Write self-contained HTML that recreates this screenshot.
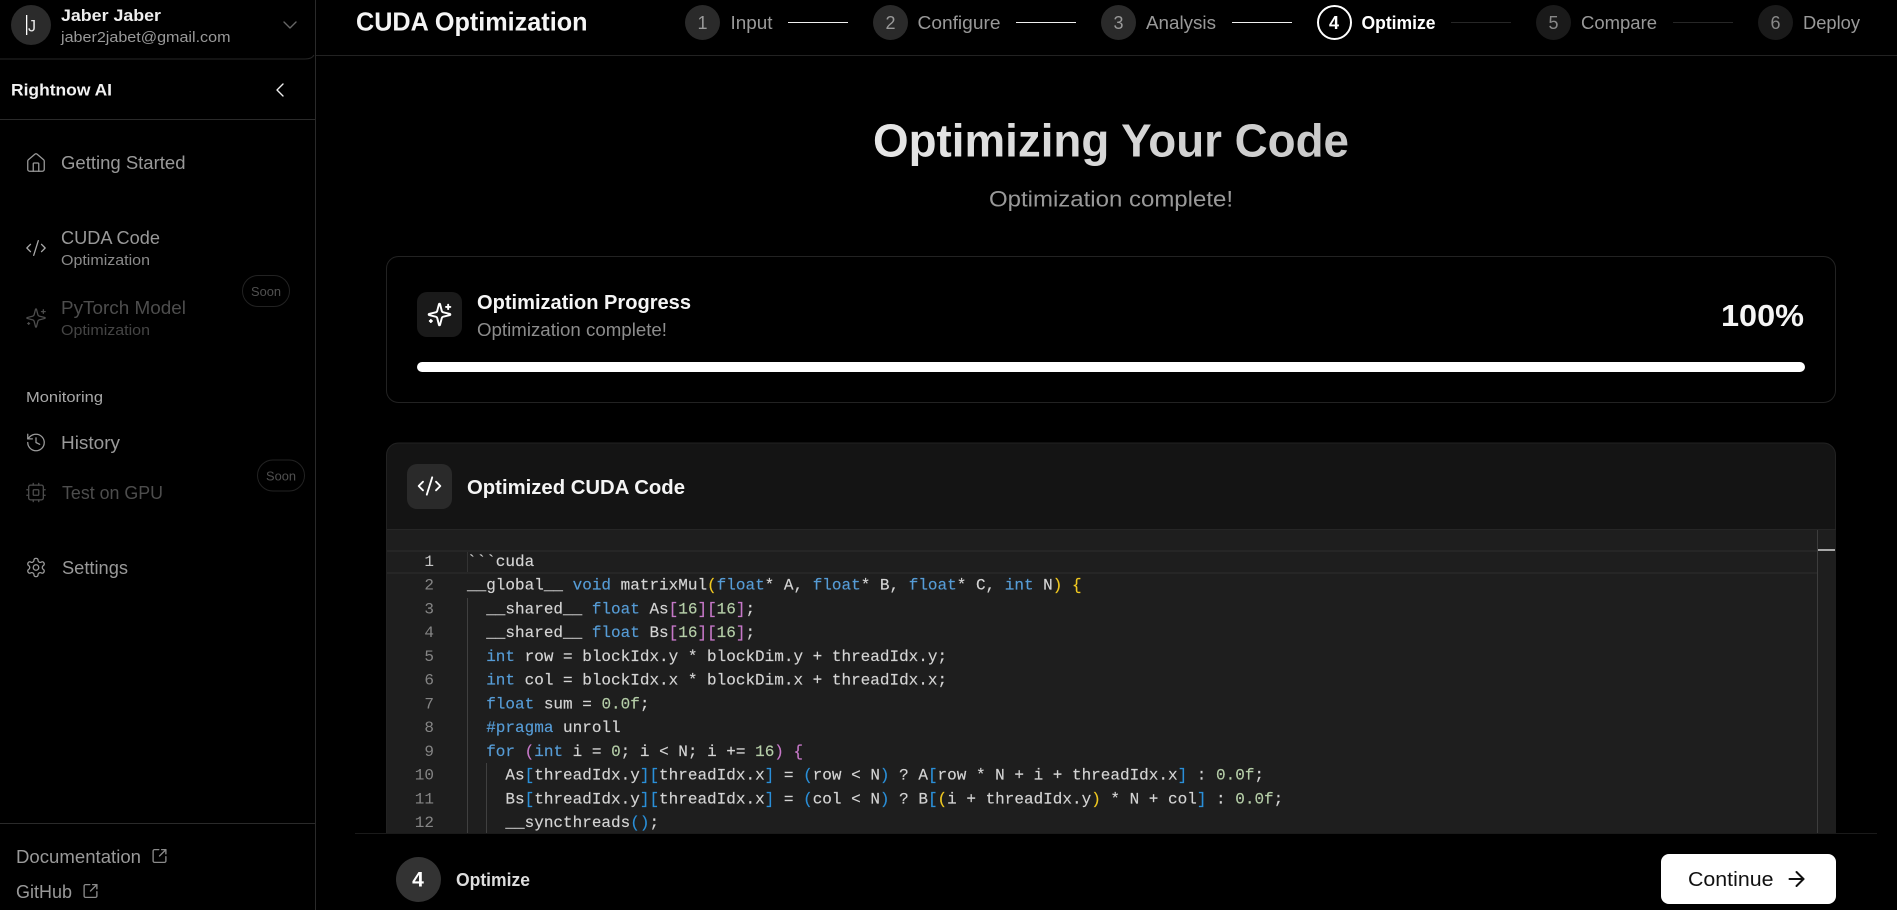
<!DOCTYPE html>
<html lang="en">
<head>
<meta charset="utf-8">
<title>CUDA Optimization</title>
<style>
html,body{margin:0;padding:0;background:#000;width:1897px;height:910px;overflow:hidden}
svg{display:block}
text{font-family:"Liberation Sans",Arial,sans-serif}
.b{font-weight:700}
.code text{font-family:"Liberation Mono",monospace;font-size:16px;fill:#d4d4d4;stroke:#d4d4d4;stroke-width:.15;white-space:pre}
.k{fill:#569cd6;stroke:#569cd6}.n{fill:#b5cea8;stroke:#b5cea8}.g{fill:#f0c820;stroke:#f0c820}.p{fill:#c678c8;stroke:#c678c8}.l{fill:#2a8fd8;stroke:#2a8fd8}
.ln text{font-family:"Liberation Mono",monospace;font-size:16px;fill:#858585;text-anchor:end}
.ic{fill:none;stroke-linecap:round;stroke-linejoin:round}
</style>
</head>
<body>
<svg xmlns="http://www.w3.org/2000/svg" width="1897" height="910" viewBox="0 0 1897 910">
<defs>
<linearGradient id="hg" x1="0" y1="0" x2="1" y2="0"><stop offset="0" stop-color="#e6e6e6"/><stop offset="1" stop-color="#c8c8c8"/></linearGradient>
<clipPath id="cc"><rect x="388" y="530" width="1448" height="303"/></clipPath>
</defs>
<rect width="1897" height="910" fill="#000"/>

<!-- Sidebar -->
<g>
<rect x="315" y="0" width="1" height="910" fill="#2a2a2a"/>
<circle cx="31" cy="25" r="20" fill="#2b2b2b"/>
<rect x="26" y="15" width="1.3" height="20" fill="#fff"/>
<text x="28" y="31.5" font-size="17" fill="#e8e8e8" textLength="8" lengthAdjust="spacingAndGlyphs">J</text>
<text class="b" x="61" y="21" font-size="16.5" fill="#eee" textLength="100" lengthAdjust="spacingAndGlyphs">Jaber Jaber</text>
<text x="61" y="42" font-size="14.5" fill="#999" textLength="169.5" lengthAdjust="spacingAndGlyphs">jaber2jabet@gmail.com</text>
<svg x="278" y="13" width="24" height="24" viewBox="0 0 24 24" class="ic" stroke="#666" stroke-width="1.4"><path d="m6 9 6 6 6-6"/></svg>
<path d="M0 59H305Q312 59 314 55" fill="none" stroke="#262626"/>
<text class="b" x="11" y="95.5" font-size="17" fill="#f2f2f2" textLength="101" lengthAdjust="spacingAndGlyphs">Rightnow AI</text>
<svg x="268" y="78" width="24" height="24" viewBox="0 0 24 24" class="ic" stroke="#eee" stroke-width="1.4"><path d="m15 18-6-6 6-6"/></svg>
<rect x="0" y="119" width="315" height="1" fill="#2a2a2a"/>

<svg x="25" y="152" width="22" height="22" viewBox="0 0 24 24" class="ic" stroke="#999" stroke-width="1.4"><path d="M15 21v-8a1 1 0 0 0-1-1h-4a1 1 0 0 0-1 1v8"/><path d="M3 10a2 2 0 0 1 .709-1.528l7-5.999a2 2 0 0 1 2.582 0l7 5.999A2 2 0 0 1 21 10v9a2 2 0 0 1-2 2H5a2 2 0 0 1-2-2z"/></svg>
<text x="61" y="169" font-size="18" fill="#999" textLength="124.5" lengthAdjust="spacingAndGlyphs">Getting Started</text>

<svg x="25" y="237" width="22" height="22" viewBox="0 0 24 24" class="ic" stroke="#aaa" stroke-width="1.4"><path d="m18 16 4-4-4-4"/><path d="m6 8-4 4 4 4"/><path d="m14.5 4-5 16"/></svg>
<text x="61" y="244" font-size="18" fill="#999" textLength="99" lengthAdjust="spacingAndGlyphs">CUDA Code</text>
<text x="61" y="265" font-size="15" fill="#8a8a8a" textLength="89" lengthAdjust="spacingAndGlyphs">Optimization</text>

<svg x="25" y="307" width="22" height="22" viewBox="0 0 24 24" class="ic" stroke="#4d4d4d" stroke-width="1.4"><path d="M9.937 15.5A2 2 0 0 0 8.5 14.063l-6.135-1.582a.5.5 0 0 1 0-.962L8.5 9.936A2 2 0 0 0 9.937 8.5l1.582-6.135a.5.5 0 0 1 .963 0L14.063 8.5A2 2 0 0 0 15.5 9.937l6.135 1.581a.5.5 0 0 1 0 .964L15.5 14.063a2 2 0 0 0-1.437 1.437l-1.582 6.135a.5.5 0 0 1-.963 0z"/><path d="M20 3v4"/><path d="M22 5h-4"/><path d="M4 17v2"/><path d="M5 18H3"/></svg>
<text x="61" y="314" font-size="18" fill="#4d4d4d" textLength="125" lengthAdjust="spacingAndGlyphs">PyTorch Model</text>
<text x="61" y="335" font-size="15" fill="#444" textLength="89" lengthAdjust="spacingAndGlyphs">Optimization</text>
<rect x="242.5" y="275.5" width="47" height="31" rx="15.5" fill="#000" stroke="#222"/>
<text x="251" y="296" font-size="13" fill="#505050" textLength="30" lengthAdjust="spacingAndGlyphs">Soon</text>

<text x="26" y="402" font-size="14.5" fill="#a8a8a8" textLength="77" lengthAdjust="spacingAndGlyphs">Monitoring</text>
<svg x="25" y="431.5" width="22" height="22" viewBox="0 0 24 24" class="ic" stroke="#999" stroke-width="1.4"><path d="M3 12a9 9 0 1 0 9-9 9.75 9.75 0 0 0-6.74 2.74L3 8"/><path d="M3 3v5h5"/><path d="M12 7v5l4 2"/></svg>
<text x="61" y="449" font-size="18" fill="#999" textLength="59" lengthAdjust="spacingAndGlyphs">History</text>
<svg x="25" y="481.5" width="22" height="22" viewBox="0 0 24 24" class="ic" stroke="#4d4d4d" stroke-width="1.4"><rect width="16" height="16" x="4" y="4" rx="2"/><rect width="6" height="6" x="9" y="9" rx="1"/><path d="M15 2v2M15 20v2M2 15h2M2 9h2M20 15h2M20 9h2M9 2v2M9 20v2"/></svg>
<text x="62" y="499" font-size="18" fill="#4d4d4d" textLength="101" lengthAdjust="spacingAndGlyphs">Test on GPU</text>
<rect x="257.5" y="460" width="47" height="31" rx="15.5" fill="#000" stroke="#222"/>
<text x="266" y="480.5" font-size="13" fill="#505050" textLength="30" lengthAdjust="spacingAndGlyphs">Soon</text>

<svg x="25" y="556.5" width="22" height="22" viewBox="0 0 24 24" class="ic" stroke="#999" stroke-width="1.4"><path d="M12.22 2h-.44a2 2 0 0 0-2 2v.18a2 2 0 0 1-1 1.73l-.43.25a2 2 0 0 1-2 0l-.15-.08a2 2 0 0 0-2.73.73l-.22.38a2 2 0 0 0 .73 2.73l.15.1a2 2 0 0 1 1 1.72v.51a2 2 0 0 1-1 1.74l-.15.09a2 2 0 0 0-.73 2.73l.22.38a2 2 0 0 0 2.73.73l.15-.08a2 2 0 0 1 2 0l.43.25a2 2 0 0 1 1 1.73V20a2 2 0 0 0 2 2h.44a2 2 0 0 0 2-2v-.18a2 2 0 0 1 1-1.73l.43-.25a2 2 0 0 1 2 0l.15.08a2 2 0 0 0 2.73-.73l.22-.39a2 2 0 0 0-.73-2.73l-.15-.08a2 2 0 0 1-1-1.74v-.5a2 2 0 0 1 1-1.74l.15-.09a2 2 0 0 0 .73-2.73l-.22-.38a2 2 0 0 0-2.73-.73l-.15.08a2 2 0 0 1-2 0l-.43-.25a2 2 0 0 1-1-1.73V4a2 2 0 0 0-2-2z"/><circle cx="12" cy="12" r="3"/></svg>
<text x="62" y="574" font-size="18" fill="#999" textLength="66" lengthAdjust="spacingAndGlyphs">Settings</text>

<rect x="0" y="823" width="315" height="1" fill="#2a2a2a"/>
<text x="16" y="863" font-size="18" fill="#999" textLength="125" lengthAdjust="spacingAndGlyphs">Documentation</text>
<svg x="151" y="847.5" width="17" height="17" viewBox="0 0 24 24" class="ic" stroke="#8a8a8a" stroke-width="1.9"><path d="M21 13v6a2 2 0 0 1-2 2H5a2 2 0 0 1-2-2V5a2 2 0 0 1 2-2h6"/><path d="m21 3-9 9"/><path d="M15 3h6v6"/></svg>
<text x="16" y="898" font-size="18" fill="#999" textLength="56" lengthAdjust="spacingAndGlyphs">GitHub</text>
<svg x="82" y="882.5" width="17" height="17" viewBox="0 0 24 24" class="ic" stroke="#8a8a8a" stroke-width="1.9"><path d="M21 13v6a2 2 0 0 1-2 2H5a2 2 0 0 1-2-2V5a2 2 0 0 1 2-2h6"/><path d="m21 3-9 9"/><path d="M15 3h6v6"/></svg>
</g>

<!-- Header -->
<g>
<rect x="316" y="55" width="1581" height="1" fill="#222"/>
<text class="b" x="356" y="30.5" font-size="26" fill="#f5f5f5" textLength="231.5" lengthAdjust="spacingAndGlyphs">CUDA Optimization</text>

<circle cx="702.5" cy="22.5" r="17.5" fill="#2a2a2a"/>
<text x="702.5" y="29" font-size="18" fill="#999" text-anchor="middle">1</text>
<text x="730.5" y="29" font-size="18" fill="#999" textLength="42" lengthAdjust="spacingAndGlyphs">Input</text>
<rect x="788" y="22" width="60" height="1" fill="#f0f0f0"/>

<circle cx="890.5" cy="22.5" r="17.5" fill="#2a2a2a"/>
<text x="890.5" y="29" font-size="18" fill="#999" text-anchor="middle">2</text>
<text x="917.5" y="29" font-size="18" fill="#999" textLength="83" lengthAdjust="spacingAndGlyphs">Configure</text>
<rect x="1016" y="22" width="60" height="1" fill="#f0f0f0"/>

<circle cx="1118.5" cy="22.5" r="17.5" fill="#2a2a2a"/>
<text x="1118.5" y="29" font-size="18" fill="#999" text-anchor="middle">3</text>
<text x="1146" y="29" font-size="18" fill="#999" textLength="70" lengthAdjust="spacingAndGlyphs">Analysis</text>
<rect x="1232" y="22" width="60" height="1" fill="#f0f0f0"/>

<circle cx="1334.5" cy="22.5" r="16.5" fill="#000" stroke="#fff" stroke-width="2"/>
<text class="b" x="1334" y="29" font-size="18" fill="#fff" text-anchor="middle">4</text>
<text class="b" x="1361.5" y="29" font-size="18" fill="#fff" textLength="74" lengthAdjust="spacingAndGlyphs">Optimize</text>
<rect x="1451" y="22" width="60" height="1" fill="#262626"/>

<circle cx="1553.5" cy="22.5" r="17.5" fill="#1a1a1a"/>
<text x="1553.5" y="29" font-size="18" fill="#888" text-anchor="middle">5</text>
<text x="1581" y="29" font-size="18" fill="#999" textLength="76" lengthAdjust="spacingAndGlyphs">Compare</text>
<rect x="1673" y="22" width="60" height="1" fill="#262626"/>

<circle cx="1775.5" cy="22.5" r="17.5" fill="#1a1a1a"/>
<text x="1775.5" y="29" font-size="18" fill="#888" text-anchor="middle">6</text>
<text x="1803" y="29" font-size="18" fill="#999" textLength="57" lengthAdjust="spacingAndGlyphs">Deploy</text>
</g>

<!-- Heading -->
<text class="b" x="873" y="156.5" font-size="46" fill="url(#hg)" textLength="476" lengthAdjust="spacingAndGlyphs">Optimizing Your Code</text>
<text x="989" y="206.5" font-size="22" fill="#999" textLength="244" lengthAdjust="spacingAndGlyphs">Optimization complete!</text>

<!-- Progress card -->
<g>
<rect x="386.5" y="256.5" width="1449" height="146" rx="12" fill="#000" stroke="#222"/>
<rect x="417" y="292" width="45" height="45" rx="10" fill="#1a1a1a"/>
<svg x="426.5" y="301.5" width="26" height="26" viewBox="0 0 24 24" class="ic" stroke="#fff" stroke-width="1.8"><path d="M9.937 15.5A2 2 0 0 0 8.5 14.063l-6.135-1.582a.5.5 0 0 1 0-.962L8.5 9.936A2 2 0 0 0 9.937 8.5l1.582-6.135a.5.5 0 0 1 .963 0L14.063 8.5A2 2 0 0 0 15.5 9.937l6.135 1.581a.5.5 0 0 1 0 .964L15.5 14.063a2 2 0 0 0-1.437 1.437l-1.582 6.135a.5.5 0 0 1-.963 0z"/><path d="M20 3v4"/><path d="M22 5h-4"/><path d="M4 17v2"/><path d="M5 18H3"/></svg>
<text class="b" x="477" y="309" font-size="20" fill="#f5f5f5" textLength="214" lengthAdjust="spacingAndGlyphs">Optimization Progress</text>
<text x="477" y="336" font-size="18" fill="#8c8c8c" textLength="190" lengthAdjust="spacingAndGlyphs">Optimization complete!</text>
<text class="b" x="1721" y="326" font-size="31" fill="#f5f5f5" textLength="83" lengthAdjust="spacingAndGlyphs">100%</text>
<rect x="417" y="362" width="1388" height="10" rx="5" fill="#fff"/>
</g>

<!-- Code card -->
<g>
<path d="M386.5 910V455a12 12 0 0 1 12-12H1823.5a12 12 0 0 1 12 12V910" fill="#141414" stroke="#222"/>
<rect x="407" y="464" width="45" height="45" rx="10" fill="#2a2a2a"/>
<svg x="416.5" y="473" width="26" height="26" viewBox="0 0 24 24" class="ic" stroke="#fff" stroke-width="1.7"><path d="m18 16 4-4-4-4"/><path d="m6 8-4 4 4 4"/><path d="m14.5 4-5 16"/></svg>
<text class="b" x="467" y="494" font-size="20" fill="#f5f5f5" textLength="218" lengthAdjust="spacingAndGlyphs">Optimized CUDA Code</text>
<rect x="387" y="529" width="1449" height="1" fill="#262626"/>
<rect x="387" y="530" width="1449" height="380" fill="#1e1e1e"/>
<rect x="387" y="550" width="1430" height="2" fill="#262626"/>
<rect x="387" y="572" width="1430" height="2" fill="#262626"/>
<rect x="1817" y="530" width="1" height="380" fill="#3d3d3d"/>
<rect x="1818" y="549" width="17" height="2" fill="#a8a8a8"/>
<rect x="467" y="552" width="1" height="20" fill="#333"/>
<rect x="467" y="598" width="1" height="236" fill="#404040"/>
<rect x="486" y="763" width="1" height="70" fill="#404040"/>
</g>

<g class="ln">
<text x="434" y="566" style="fill:#c6c6c6">1</text>
<text x="434" y="589.7">2</text>
<text x="434" y="613.5">3</text>
<text x="434" y="637.2">4</text>
<text x="434" y="660.9">5</text>
<text x="434" y="684.7">6</text>
<text x="434" y="708.4">7</text>
<text x="434" y="732.1">8</text>
<text x="434" y="755.8">9</text>
<text x="434" y="779.6">10</text>
<text x="434" y="803.3">11</text>
<text x="434" y="827">12</text>
</g>

<g class="code" clip-path="url(#cc)">
<text x="467" y="566">&#96;&#96;&#96;cuda</text>
<text x="467" y="589.7">__global__ <tspan class="k">void</tspan> matrixMul<tspan class="g">(</tspan><tspan class="k">float</tspan>* A, <tspan class="k">float</tspan>* B, <tspan class="k">float</tspan>* C, <tspan class="k">int</tspan> N<tspan class="g">) {</tspan></text>
<text x="467" y="613.5">  __shared__ <tspan class="k">float</tspan> As<tspan class="p">[</tspan><tspan class="n">16</tspan><tspan class="p">][</tspan><tspan class="n">16</tspan><tspan class="p">]</tspan>;</text>
<text x="467" y="637.2">  __shared__ <tspan class="k">float</tspan> Bs<tspan class="p">[</tspan><tspan class="n">16</tspan><tspan class="p">][</tspan><tspan class="n">16</tspan><tspan class="p">]</tspan>;</text>
<text x="467" y="660.9">  <tspan class="k">int</tspan> row = blockIdx.y * blockDim.y + threadIdx.y;</text>
<text x="467" y="684.7">  <tspan class="k">int</tspan> col = blockIdx.x * blockDim.x + threadIdx.x;</text>
<text x="467" y="708.4">  <tspan class="k">float</tspan> sum = <tspan class="n">0.0f</tspan>;</text>
<text x="467" y="732.1">  <tspan class="k">#pragma</tspan> unroll</text>
<text x="467" y="755.8">  <tspan class="k">for</tspan> <tspan class="p">(</tspan><tspan class="k">int</tspan> i = <tspan class="n">0</tspan>; i &lt; N; i += <tspan class="n">16</tspan><tspan class="p">) {</tspan></text>
<text x="467" y="779.6">    As<tspan class="l">[</tspan>threadIdx.y<tspan class="l">][</tspan>threadIdx.x<tspan class="l">]</tspan> = <tspan class="l">(</tspan>row &lt; N<tspan class="l">)</tspan> ? A<tspan class="l">[</tspan>row * N + i + threadIdx.x<tspan class="l">]</tspan> : <tspan class="n">0.0f</tspan>;</text>
<text x="467" y="803.3">    Bs<tspan class="l">[</tspan>threadIdx.y<tspan class="l">][</tspan>threadIdx.x<tspan class="l">]</tspan> = <tspan class="l">(</tspan>col &lt; N<tspan class="l">)</tspan> ? B<tspan class="l">[</tspan><tspan class="g">(</tspan>i + threadIdx.y<tspan class="g">)</tspan> * N + col<tspan class="l">]</tspan> : <tspan class="n">0.0f</tspan>;</text>
<text x="467" y="827">    __syncthreads<tspan class="l">()</tspan>;</text>
</g>

<!-- Footer bar -->
<g>
<rect x="316" y="833" width="1581" height="77" fill="#000"/>
<rect x="355" y="833" width="1522" height="1" fill="#1a1a1a"/>
<circle cx="418.5" cy="879.5" r="22.5" fill="#333"/>
<text class="b" x="418" y="886.5" font-size="21" fill="#fff" text-anchor="middle">4</text>
<text class="b" x="456" y="886" font-size="18" fill="#ddd" textLength="74" lengthAdjust="spacingAndGlyphs">Optimize</text>
<rect x="1661" y="854" width="175" height="50" rx="8" fill="#fff"/>
<text x="1688" y="886" font-size="20" fill="#111" textLength="85.5" lengthAdjust="spacingAndGlyphs">Continue</text>
<svg x="1784.5" y="867" width="24" height="24" viewBox="0 0 24 24" class="ic" stroke="#111" stroke-width="2"><path d="M5 12h14"/><path d="m12 5 7 7-7 7"/></svg>
</g>
</svg>
</body>
</html>
